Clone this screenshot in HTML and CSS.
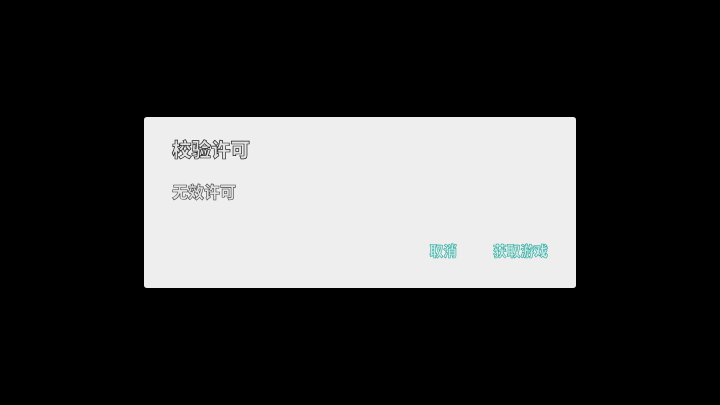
FILE: index.html
```html
<!DOCTYPE html>
<html lang="zh-CN">
<head>
    <meta charset="UTF-8">
    <meta name="viewport" content="width=device-width, initial-scale=1.0">
    <title>校验许可</title>
    <link rel="stylesheet" href="styles.css">
</head>
<body>
    <div class="dialog">
        <div class="dialog-title">校验许可</div>
        <div class="dialog-message">无效许可</div>
        <div class="dialog-actions">
            <span class="dialog-button">取消</span>
            <span class="dialog-button">获取游戏</span>
        </div>
    </div>
</body>
</html>
```

FILE: styles.css
```css
* {
    margin: 0;
    padding: 0;
    box-sizing: border-box;
}

body {
    font-family: "Noto Sans CJK SC", "Noto Sans", sans-serif;
    background: #000;
    width: 720px;
    height: 405px;
    display: flex;
    justify-content: center;
    align-items: center;
    overflow: hidden;
}

.dialog {
    width: 432px;
    height: 171px;
    padding: 18px 28px 28px;
    background: #eeeeee;
    border-radius: 3px;
    display: flex;
    flex-direction: column;
}

.dialog-title {
    font-size: 19.5px;
    line-height: 28px;
    font-weight: 900;
    color: #e4e4e4;
    -webkit-text-stroke: 0.7px #222;
    filter: blur(0.3px);
}

.dialog-message {
    margin-top: 16px;
    font-size: 16px;
    line-height: 24px;
    font-weight: 900;
    color: #e4e4e4;
    -webkit-text-stroke: 0.6px #444;
    filter: blur(0.3px);
}

.dialog-actions {
    margin-top: auto;
    display: flex;
    justify-content: flex-end;
    gap: 36px;
}

.dialog-button {
    font-size: 13.75px;
    line-height: 20px;
    font-weight: 900;
    color: #d0ecea;
    -webkit-text-stroke: 0.55px #26a69a;
    filter: blur(0.3px);
}
```
